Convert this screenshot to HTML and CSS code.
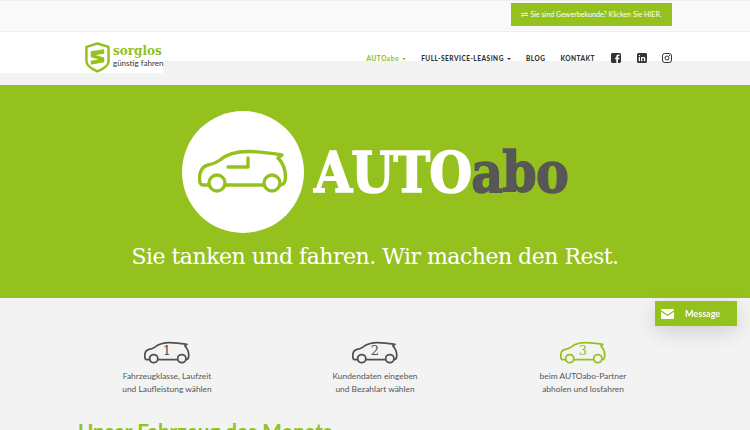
FILE: index.html
```html
<!DOCTYPE html>
<html lang="de">
<head>
    <meta charset="UTF-8">
    <meta name="viewport" content="width=device-width, initial-scale=1.0">
    <title>sorglos AUTOabo</title>
    <link rel="stylesheet" href="styles.css">
</head>
<body>
    <svg class="defs" width="0" height="0">
        <symbol id="car" viewBox="0 0 90 46">
            <path d="M11 36H5C2.500 36 1.500 33 1.500 29C1.500 22 5 17 10 16C15 15 18 14 22 11C29 5 38 2.500 50 2.500C60 2.500 72 4 84 6L80 9C85 14 87.500 20 87.500 28C87.500 33 86 36 82 36M28 36H65" fill="none" stroke="currentColor" stroke-width="3.400" stroke-linecap="round" stroke-linejoin="round"/>
            <circle cx="19" cy="34" r="8" fill="none" stroke="currentColor" stroke-width="3.400"/>
            <circle cx="74" cy="34" r="8" fill="none" stroke="currentColor" stroke-width="3.400"/>
        </symbol>
    </svg>

    <div class="topbar">
        <a class="topbar-btn" href="#">
            <svg class="swap-icon" viewBox="0 0 12 10" width="7" height="7"><path d="M0 3H9V1L12 3.200L9 5.200V4H0ZM12 6H3V4.800L0 7L3 9.200V7H12Z" fill="#fff"/></svg>
            Sie sind Gewerbekunde? Klicken Sie HIER.
        </a>
    </div>

    <header class="header">
        <a class="logo" href="#">
            <svg class="logo-shield" viewBox="0 0 26 32" width="25" height="31">
                <path d="M13 1.500L24.500 5V20C24.500 24 19 28 13 30.500C7 28 1.500 24 1.500 20V5Z" fill="#fff" stroke="#95c11f" stroke-width="2.600" stroke-linejoin="round"/>
                <path d="M6 9.500L20 7.500V12L11 13.500L20 16V21L6 23.500V19.500L14 18L6 15.500Z" fill="#95c11f"/>
            </svg>
            <span class="logo-text">
                <span class="logo-name">sorglos</span>
                <span class="logo-claim">günstig fahren</span>
            </span>
        </a>
        <div class="nav-wrap">
            <nav class="nav">
                <a class="nav-link active" href="#">AUTOabo <i class="caret"></i></a>
                <a class="nav-link" href="#">FULL-SERVICE-LEASING <i class="caret"></i></a>
                <a class="nav-link" href="#">BLOG</a>
                <a class="nav-link" href="#">KONTAKT</a>
                <span class="socials">
                    <svg viewBox="0 0 10 10" width="10" height="10"><path d="M1.500 0H8.500C9.300 0 10 .7 10 1.500V8.500C10 9.300 9.300 10 8.500 10H7V6.200H8.300L8.500 4.700H7V3.800C7 3.300 7.200 3 7.800 3H8.600V1.700C8.300 1.600 7.800 1.600 7.300 1.600C6.100 1.600 5.300 2.300 5.300 3.600V4.700H4V6.200H5.300V10H1.500C.7 10 0 9.300 0 8.500V1.500C0 .7 .7 0 1.500 0Z" fill="#333"/></svg>
                    <svg viewBox="0 0 10 10" width="10" height="10"><path fill-rule="evenodd" d="M1.500 0H8.500C9.300 0 10 .7 10 1.500V8.500C10 9.300 9.300 10 8.500 10H1.500C.7 10 0 9.300 0 8.500V1.500C0 .7 .7 0 1.500 0ZM1.700 4V8.300H3V4ZM2.350 1.800A.75 .75 0 1 0 2.350 3.300A.75 .75 0 1 0 2.350 1.800ZM4 4V8.300H5.300V6C5.300 5.300 5.600 5 6.100 5C6.600 5 6.900 5.300 6.900 6V8.300H8.300V5.700C8.300 4.500 7.600 3.900 6.700 3.900C6 3.900 5.500 4.200 5.300 4.600V4Z" fill="#333"/></svg>
                    <svg viewBox="0 0 10 10" width="10" height="10"><rect x=".5" y=".5" width="9" height="9" rx="2.300" fill="none" stroke="#333"/><circle cx="5" cy="5" r="2" fill="none" stroke="#333"/><circle cx="7.600" cy="2.400" r=".6" fill="#333"/></svg>
                </span>
            </nav>
        </div>
    </header>

    <section class="hero">
        <div class="hero-brand">
            <div class="hero-circle">
                <svg viewBox="0 0 90 46" width="90" height="46">
                    <use href="#car" class="hero-car"/>
                    <path d="M30 18H50V9" fill="none" stroke="#95c11f" stroke-width="3.400" stroke-linecap="round" stroke-linejoin="round"/>
                </svg>
            </div>
            <div class="hero-logo">AUTO<span class="hero-logo-dark">abo</span></div>
        </div>
        <h1 class="hero-title">Sie tanken und fahren. Wir machen den Rest.</h1>
    </section>

    <section class="steps">
        <div class="step">
            <div class="step-car"><svg width="46" height="24"><use href="#car"/></svg><span class="step-num">1</span></div>
            <p>Fahrzeugklasse, Laufzeit<br>und Laufleistung wählen</p>
        </div>
        <div class="step">
            <div class="step-car"><svg width="46" height="24"><use href="#car"/></svg><span class="step-num">2</span></div>
            <p>Kundendaten eingeben<br>und Bezahlart wählen</p>
        </div>
        <div class="step step-green">
            <div class="step-car"><svg width="46" height="24"><use href="#car"/></svg><span class="step-num">3</span></div>
            <p>beim AUTOabo-Partner<br>abholen und losfahren</p>
        </div>
    </section>

    <h2 class="month-title">Unser Fahrzeug des Monats</h2>

    <a class="message" href="#">
        <svg viewBox="0 0 13 10" width="13" height="10"><path d="M1 0H12C12.600 0 13 .4 13 1V1.300L6.500 5.500L0 1.300V1C0 .4 .4 0 1 0ZM0 2.800L6.500 7L13 2.800V9C13 9.600 12.600 10 12 10H1C.4 10 0 9.600 0 9Z" fill="#fff"/></svg>
        <span>Message</span>
    </a>
</body>
</html>
```

FILE: styles.css
```css
* {
    box-sizing: border-box;
}

html, body {
    height: 430px;
    overflow: hidden;
}

body {
    margin: 0;
    font-family: Lato, 'Open Sans', sans-serif;
    background: #f3f3f3;
    color: #444;
}

a {
    text-decoration: none;
    color: inherit;
}

.defs {
    display: block;
}

.topbar {
    height: 32px;
    padding: 2px 78px 0 0;
    background: #f9f9f9;
    border-top: 1px solid #eee;
    border-bottom: 1px solid #f0f0f0;
    display: flex;
    justify-content: flex-end;
}

.topbar-btn {
    width: 161px;
    height: 23px;
    background: #95c11f;
    color: #fff;
    font-size: 7.100px;
    display: flex;
    align-items: center;
    justify-content: center;
    gap: 2px;
}

.header {
    display: flex;
    height: 41px;
}

.logo {
    width: 163px;
    height: 41px;
    flex: none;
    padding: 10px 0 0 85px;
    background: #fff;
    display: flex;
    gap: 3px;
    white-space: nowrap;
}

.logo-shield {
    flex: none;
}

.logo-text {
    display: flex;
    flex-direction: column;
    padding-top: 2px;
}

.logo-name {
    font-family: 'DejaVu Serif', serif;
    font-weight: bold;
    font-size: 12px;
    line-height: 15px;
    color: #95c11f;
}

.logo-claim {
    font-size: 8px;
    line-height: 9px;
    color: #333;
}

.nav-wrap {
    flex: 1;
    height: 29px;
    background: #fff;
}

.nav {
    display: flex;
    align-items: center;
    padding: 23px 78px 0 0;
    justify-content: flex-end;
    height: 29px;
    white-space: nowrap;
}

.nav-link {
    font-size: 6.500px;
    font-weight: 900;
    letter-spacing: .5px;
    color: #333;
    margin-right: 15px;
}

.nav-link.active {
    color: #95c11f;
}

.caret {
    display: inline-block;
    margin-left: 1px;
    vertical-align: 1px;
    border-top: 2px solid currentColor;
    border-left: 2px solid transparent;
    border-right: 2px solid transparent;
}

.socials {
    display: flex;
    gap: 15.500px;
    margin-left: 1px;
}

.hero {
    height: 213px;
    margin-top: 12px;
    background: #95c11f;
    padding-top: 26px;
    text-align: center;
}

.hero-brand {
    display: flex;
    align-items: center;
    padding-left: 182px;
    height: 122px;
}

.hero-circle {
    width: 122px;
    height: 122px;
    flex: none;
    border-radius: 50%;
    background: #fff;
    display: flex;
    align-items: center;
    justify-content: center;
    color: #95c11f;
}

.hero-logo {
    margin-left: 10px;
    font-family: 'DejaVu Serif', serif;
    font-weight: bold;
    font-size: 56px;
    letter-spacing: -1px;
    color: #fff;
    -webkit-text-stroke: 1.500px #fff;
    transform: scaleX(.88);
    transform-origin: left center;
}

.hero-logo-dark {
    color: #575756;
    -webkit-text-stroke: 1.500px #575756;
}

.hero-title {
    margin: 11px 0 0;
    font-family: 'DejaVu Serif', serif;
    font-weight: normal;
    font-size: 22px;
    letter-spacing: -.5px;
    color: #fff;
}

.steps {
    display: grid;
    grid-template-columns: repeat(3, 1fr);
    width: 624px;
    margin: 43px 0 0 63px;
    font-size: 8.400px;
    text-align: center;
    color: #555;
}

.step p {
    margin: 5px 0 0;
    line-height: 13px;
}

.step-car {
    position: relative;
    width: 46px;
    height: 24px;
    margin: 0 auto;
    color: #505050;
}

.step-num {
    position: absolute;
    left: 0;
    right: 0;
    top: 0;
    font-family: 'DejaVu Serif', serif;
    font-size: 13px;
    line-height: 19px;
}

.step-green .step-car {
    color: #95c11f;
}

.month-title {
    margin: 23px 0 0 78px;
    font-size: 20.700px;
    line-height: 24px;
    font-weight: bold;
    color: #95c11f;
    white-space: nowrap;
}

.message {
    position: fixed;
    left: 655px;
    top: 301px;
    width: 82px;
    height: 25px;
    padding-left: 6px;
    display: flex;
    align-items: center;
    gap: 11px;
    background: #95c11f;
    color: #fff;
    font-size: 9px;
    font-weight: bold;
    box-shadow: 0 6px 20px rgba(0, 0, 0, 0.15);
}
```
